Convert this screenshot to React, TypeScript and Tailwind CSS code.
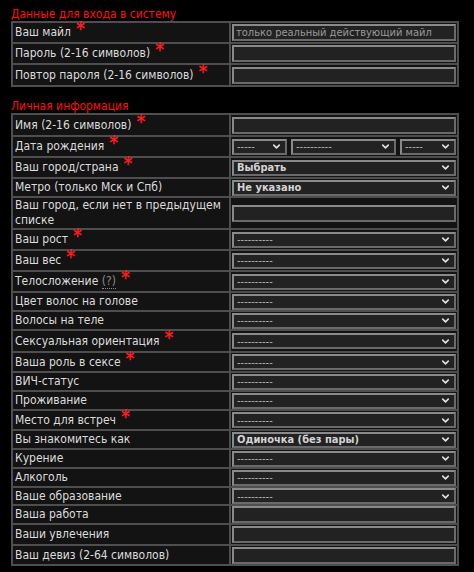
import { ChevronDown } from 'lucide-react';

type Field = {
  label: string;
  req?: boolean;
  hint?: boolean;
  kind: 'text' | 'select' | 'date';
  value?: string;
  placeholder?: string;
  h: string;
};

const login: Field[] = [
  { label: 'Ваш майл', req: true, kind: 'text', placeholder: 'только реальный действующий майл', h: 'h-[19px]' },
  { label: 'Пароль (2-16 символов)', req: true, kind: 'text', h: 'h-[19px]' },
  { label: 'Повтор пароля (2-16 символов)', req: true, kind: 'text', h: 'h-[20px]' },
];

const personal: Field[] = [
  { label: 'Имя (2-16 символов)', req: true, kind: 'text', h: 'h-[20px]' },
  { label: 'Дата рождения', req: true, kind: 'date', h: 'h-[19px]' },
  { label: 'Ваш город/страна', req: true, kind: 'select', value: 'Выбрать', h: 'h-[19px]' },
  { label: 'Метро (только Мск и Спб)', kind: 'select', value: 'Не указано', h: 'h-[17px]' },
  { label: 'Ваш город, если нет в предыдущем списке', kind: 'text', h: 'h-[29px]' },
  { label: 'Ваш рост', req: true, kind: 'select', h: 'h-[19px]' },
  { label: 'Ваш вес', req: true, kind: 'select', h: 'h-[19px]' },
  { label: 'Телосложение', req: true, hint: true, kind: 'select', h: 'h-[19px]' },
  { label: 'Цвет волос на голове', kind: 'select', h: 'h-[17px]' },
  { label: 'Волосы на теле', kind: 'select', h: 'h-[17px]' },
  { label: 'Сексуальная ориентация', req: true, kind: 'select', h: 'h-[20px]' },
  { label: 'Ваша роль в сексе', req: true, kind: 'select', h: 'h-[18px]' },
  { label: 'ВИЧ-статус', kind: 'select', h: 'h-[17px]' },
  { label: 'Проживание', kind: 'select', h: 'h-[17px]' },
  { label: 'Место для встреч', req: true, kind: 'select', h: 'h-[18px]' },
  { label: 'Вы знакомитесь как', kind: 'select', value: 'Одиночка (без пары)', h: 'h-[17px]' },
  { label: 'Курение', kind: 'select', h: 'h-[17px]' },
  { label: 'Алкоголь', kind: 'select', h: 'h-[17px]' },
  { label: 'Ваше образование', kind: 'select', h: 'h-[16px]' },
  { label: 'Ваша работа', kind: 'text', h: 'h-[17px]' },
  { label: 'Ваши увлечения', kind: 'text', h: 'h-[19px]' },
  { label: 'Ваш девиз (2-64 символов)', kind: 'text', h: 'h-[18px]' },
];

function Select({ value, className }: { value?: string; className?: string }) {
  const v = value ?? '----------';
  const dashes = v.startsWith('-');
  return (
    <div
      className={`h-[16px] flex items-center justify-between bg-[#222] border-2 border-t-[#8a8a8a] border-l-[#8a8a8a] border-r-[#6a6a6a] border-b-[#6a6a6a] pl-[3px] pr-[3px] ${className ?? ''}`}
    >
      <span
        className={
          dashes
            ? 'text-[11px] text-[#b5b5b5] leading-none'
            : 'text-[11px] font-bold text-[#d4d4d4] leading-none'
        }
      >
        {v}
      </span>
      <ChevronDown size={11} strokeWidth={3.5} className="text-[#e0e0e0] shrink-0" />
    </div>
  );
}

function TextBox({ placeholder }: { placeholder?: string }) {
  return (
    <div className="h-[17px] flex items-center bg-[#222] border-2 border-t-[#8a8a8a] border-l-[#8a8a8a] border-r-[#6a6a6a] border-b-[#6a6a6a] px-[2px]">
      {placeholder && <span className="text-[11px] text-[#9a9a9a] leading-none whitespace-nowrap">{placeholder}</span>}
    </div>
  );
}

function Row({ f }: { f: Field }) {
  return (
    <tr className={f.h}>
      <td className="bg-[#131313] px-[2px] py-0 align-middle text-[12px] leading-[15px] text-[#dcdcdc]">
        {f.label}
        {f.hint && (
          <>
            {' '}
            <span className="text-[#8a8a8a] border-b border-dotted border-[#8a8a8a]">(?)</span>
          </>
        )}
        {f.req && (
          <span className="text-[#ff1a1a] text-[19px] font-bold leading-[0] relative top-[-1px] ml-[5px]">*</span>
        )}
      </td>
      <td className="bg-[#131313] px-[1px] py-0 align-middle">
        {f.kind === 'text' && <TextBox placeholder={f.placeholder} />}
        {f.kind === 'select' && <Select value={f.value} />}
        {f.kind === 'date' && (
          <div className="flex gap-[4px]">
            <Select value="-----" className="w-[55px]" />
            <Select value="----------" className="flex-1" />
            <Select value="-----" className="w-[56px]" />
          </div>
        )}
      </td>
    </tr>
  );
}

function Section({ title, fields }: { title: string; fields: Field[] }) {
  return (
    <div>
      <div className="text-[12px] leading-[14px] text-[#ff1010]">{title}</div>
      <table className="w-[448px] table-fixed border-separate border-spacing-[2px] bg-[#4e4e4e]">
        <colgroup>
          <col className="w-[216px]" />
          <col />
        </colgroup>
        <tbody>
          {fields.map((f) => (
            <Row key={f.label} f={f} />
          ))}
        </tbody>
      </table>
    </div>
  );
}

export default function App() {
  return (
    <div
      className="w-[474px] h-[572px] bg-black overflow-hidden pt-[7px] pl-[11px]"
      style={{ fontFamily: '"DejaVu Sans Condensed", "DejaVu Sans", Verdana, sans-serif' }}
    >
      <div className="flex flex-col gap-[12px]">
        <Section title="Данные для входа в систему" fields={login} />
        <Section title="Личная информация" fields={personal} />
      </div>
    </div>
  );
}
